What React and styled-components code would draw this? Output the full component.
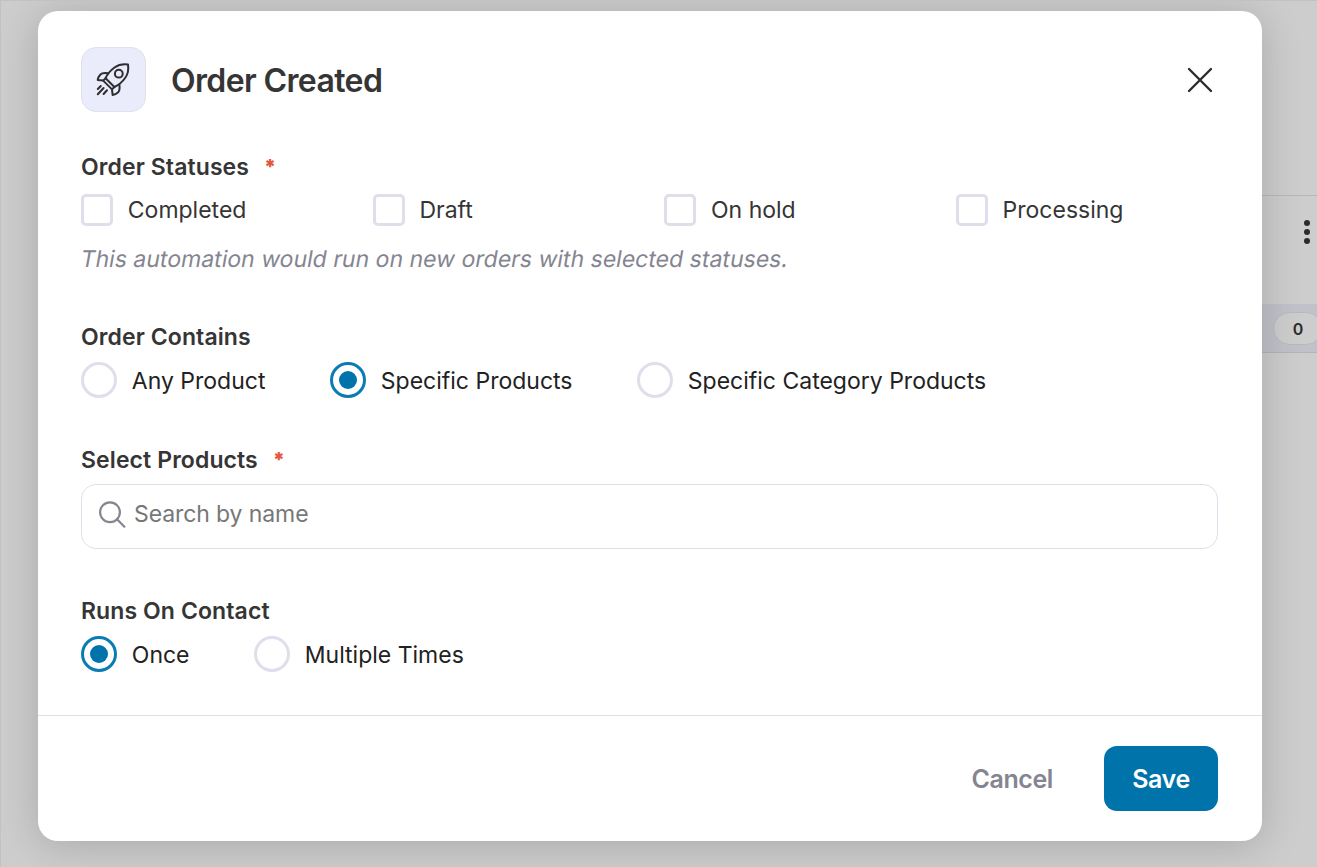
import React, { useState } from "react";
import styled, { createGlobalStyle } from "styled-components";

const statuses = ["Completed", "Draft", "On hold", "Processing"];

const containsOptions = [
  { name: "Any Product", width: 249 },
  { name: "Specific Products", width: 307 },
  { name: "Specific Category Products", width: 360 },
];

const runOptions = [
  { name: "Once", width: 173 },
  { name: "Multiple Times", width: 220 },
];

const RocketIcon = () => (
  <svg width="35" height="35" viewBox="0 0 35 35" fill="none" stroke="#2f2f2f" strokeWidth="2" strokeLinecap="round" strokeLinejoin="round">
    <path d="M32 2.500C27 1.800 22 3 18.500 5.500C14.500 8.500 11 12.500 9.600 16.200L18.400 25C22.300 23.300 26.500 19.800 29.300 15.800C31.600 12.500 32.800 7.500 32 2.500Z" />
    <circle cx="22.800" cy="11.700" r="3.900" />
    <path d="M9.600 16.200L7.200 18.600L16 27.400L18.400 25" />
    <path d="M12.300 11.300C8.500 10.600 5.800 11 4.200 12.700C2.800 14.200 2 16 1.700 18L7.200 18.600" />
    <path d="M23.300 22.500C24 26.200 23.600 28.800 21.900 30.500C20.500 31.800 18.600 32.600 16.600 32.900L16 27.400" />
    <path d="M4.800 24L1.800 27M7.600 26L1.800 32.200M11 28.300L7.600 32" />
  </svg>
);

const CloseIcon = () => (
  <svg width="26" height="26" viewBox="0 0 26 26" fill="none" stroke="#2d2d2d" strokeWidth="2.400" strokeLinecap="round">
    <path d="M2 2L24 24M24 2L2 24" />
  </svg>
);

const SearchIcon = () => (
  <svg width="28" height="28" viewBox="0 0 28 28" fill="none" stroke="#858591" strokeWidth="2.200" strokeLinecap="round">
    <circle cx="12" cy="11.300" r="9.900" />
    <path d="M19 18.300L26.400 25.700" />
  </svg>
);

const App = () => {
  const [checked, setChecked] = useState([]);
  const [contains, setContains] = useState("Specific Products");
  const [runs, setRuns] = useState("Once");

  const toggleStatus = (name) => {
    setChecked(
      checked.includes(name)
        ? checked.filter((item) => item !== name)
        : [...checked, name]
    );
  };

  return (
    <>
      <GlobalStyle />
      <Page>
        <SidePanel>
          <SideRow>
            <Dots>
              <Dot />
              <Dot />
              <Dot />
            </Dots>
          </SideRow>
          <SideCount>
            <Count>0</Count>
          </SideCount>
        </SidePanel>
        <Modal role="dialog">
          <Header>
            <IconBox>
              <RocketIcon />
            </IconBox>
            <Title>Order Created</Title>
            <CloseButton>
              <CloseIcon />
            </CloseButton>
          </Header>
          <Body>
            <Field $gap={48}>
              <Label>
                Order Statuses<Required>*</Required>
              </Label>
              <CheckGrid>
                {statuses.map((name) => (
                  <Option key={name} onClick={() => toggleStatus(name)}>
                    <CheckBox $checked={checked.includes(name)} />
                    <OptionText $color="#353535">{name}</OptionText>
                  </Option>
                ))}
              </CheckGrid>
              <Hint>This automation would run on new orders with selected statuses.</Hint>
            </Field>
            <Field $gap={47}>
              <Label>Order Contains</Label>
              <RadioRow>
                {containsOptions.map((item) => (
                  <Option key={item.name} $width={item.width} onClick={() => setContains(item.name)}>
                    <Radio $checked={contains === item.name} />
                    <RadioText>{item.name}</RadioText>
                  </Option>
                ))}
              </RadioRow>
            </Field>
            <Field $gap={47}>
              <Label $gap={9}>
                Select Products<Required>*</Required>
              </Label>
              <SearchBox>
                <SearchIcon />
                <SearchInput placeholder="Search by name" />
              </SearchBox>
            </Field>
            <Field $gap={0}>
              <Label>Runs On Contact</Label>
              <RadioRow>
                {runOptions.map((item) => (
                  <Option key={item.name} $width={item.width} onClick={() => setRuns(item.name)}>
                    <Radio $checked={runs === item.name} />
                    <RadioText>{item.name}</RadioText>
                  </Option>
                ))}
              </RadioRow>
            </Field>
          </Body>
          <Footer>
            <CancelButton>Cancel</CancelButton>
            <SaveButton>Save</SaveButton>
          </Footer>
        </Modal>
      </Page>
    </>
  );
};

const GlobalStyle = createGlobalStyle`
  * {
    box-sizing: border-box;
  }
  body {
    margin: 0;
    overflow: hidden;
    font-family: Inter, "Liberation Sans", sans-serif;
  }
  button, input {
    font-family: inherit;
    border: none;
    background: none;
    padding: 0;
  }
`;

const Page = styled.div`
  position: relative;
  display: flex;
  justify-content: flex-end;
  height: 867px;
  background-color: #cdcdcd;
  border-top: 1px solid #c2c2c2;
  border-left: 1px solid #c2c2c2;
  overflow: hidden;
`;

const SidePanel = styled.div`
  width: 100px;
  padding-top: 194px;
`;

const SideRow = styled.div`
  display: flex;
  justify-content: flex-end;
  height: 109px;
  padding: 24px 7px 0 0;
  border-top: 1px solid #b7b7be;
`;

const Dots = styled.div`
  display: flex;
  flex-direction: column;
  gap: 3px;
`;

const Dot = styled.div`
  width: 6px;
  height: 6px;
  border-radius: 50%;
  background-color: #2b2b2b;
`;

const SideCount = styled.div`
  display: flex;
  align-items: center;
  height: 49px;
  padding-left: 56px;
  background-color: #c1c2c9;
  border-bottom: 1px solid #b3b3bb;
`;

const Count = styled.div`
  display: flex;
  align-items: center;
  justify-content: center;
  flex: 0 0 50px;
  height: 33px;
  padding-top: 1px;
  border: 1px solid #b8b8c0;
  border-radius: 17px;
  background-color: #cdcdcd;
  color: #2b2b2b;
  font-size: 16px;
  font-weight: 600;
`;

const Modal = styled.div`
  position: absolute;
  top: 10px;
  left: 37px;
  display: flex;
  flex-direction: column;
  width: 1224px;
  height: 830px;
  border-radius: 20px;
  background-color: #fff;
  box-shadow: 0 4px 40px rgba(0, 0, 0, 0.18);
`;

const Header = styled.div`
  display: flex;
  align-items: center;
  padding: 36px 49px 0 43px;
`;

const IconBox = styled.div`
  display: flex;
  align-items: center;
  justify-content: center;
  width: 65px;
  height: 65px;
  border: 1px solid #e0e0ee;
  border-radius: 15px;
  background-color: #eaebfb;
`;

const Title = styled.h1`
  flex: 1;
  margin: 0 0 0 25px;
  padding-top: 3px;
  color: #353535;
  font-size: 32px;
  line-height: 40px;
  font-weight: 600;
  letter-spacing: -0.62px;
`;

const CloseButton = styled.button`
  display: flex;
  cursor: pointer;
`;

const Body = styled.div`
  flex: 1;
  padding: 40px 44px 0 43px;
`;

const Field = styled.div`
  margin-bottom: ${({ $gap }) => $gap}px;
`;

const Label = styled.div`
  display: flex;
  height: 30px;
  margin-bottom: ${({ $gap }) => $gap || 10}px;
  color: #353535;
  font-size: 23px;
  line-height: 30px;
  font-weight: 600;
  letter-spacing: 0.1px;
`;

const Required = styled.span`
  margin-left: 15px;
  color: #e4573d;
  font-size: 20px;
  line-height: 31px;
  font-weight: 900;
`;

const CheckGrid = styled.div`
  display: grid;
  grid-template-columns: repeat(4, 291.6px);
  height: 36px;
`;

const RadioRow = styled.div`
  display: flex;
  height: 36px;
`;

const Option = styled.div`
  display: flex;
  align-items: center;
  flex: none;
  width: ${({ $width }) => ($width ? `${$width}px` : "auto")};
  cursor: pointer;
`;

const OptionText = styled.span`
  margin-left: 14.8px;
  color: ${({ $color }) => $color || "#222"};
  font-size: 23px;
  line-height: 30px;
  white-space: nowrap;
`;

const RadioText = styled(OptionText)`
  padding-top: 2px;
`;

const CheckBox = styled.span`
  width: 32px;
  height: 32px;
  border: 3px solid #dfdfec;
  border-radius: 5px;
  background-color: ${({ $checked }) => ($checked ? "#0073aa" : "#fff")};
`;

const Radio = styled.span`
  display: flex;
  align-items: center;
  justify-content: center;
  width: 36px;
  height: 36px;
  border: 3px solid ${({ $checked }) => ($checked ? "#0a7cb5" : "#dfdfec")};
  border-radius: 50%;

  &::after {
    content: "";
    width: 18px;
    height: 18px;
    border-radius: 50%;
    background-color: ${({ $checked }) => ($checked ? "#0073aa" : "transparent")};
  }
`;

const Hint = styled.div`
  width: max-content;
  margin-top: 16px;
  color: #858591;
  font-size: 23px;
  line-height: 30px;
  letter-spacing: 0.02px;
  white-space: nowrap;
  transform: skewX(-10deg);
`;

const SearchBox = styled.div`
  display: flex;
  align-items: center;
  height: 65px;
  padding: 0 16px 4px;
  border: 1px solid #dfdfec;
  border-radius: 15px;
`;

const SearchInput = styled.input`
  flex: 1;
  height: 34px;
  margin: 0 0 1px 8px;
  color: #353535;
  font-size: 23px;
  letter-spacing: -0.1px;
  outline: none;

  &::placeholder {
    color: #777;
    opacity: 1;
  }
`;

const Footer = styled.div`
  display: flex;
  align-items: center;
  justify-content: flex-end;
  height: 126px;
  padding-right: 44px;
  border-top: 1px solid #dfdfea;
`;

const CancelButton = styled.button`
  margin-right: 51px;
  padding-top: 1px;
  color: #858591;
  font-size: 25px;
  font-weight: 600;
  letter-spacing: -0.4px;
  cursor: pointer;
`;

const SaveButton = styled.button`
  width: 114px;
  height: 65px;
  padding-top: 1px;
  border-radius: 13px;
  background-color: #0073aa;
  color: #fff;
  font-size: 25px;
  font-weight: 600;
  letter-spacing: -0.4px;
  cursor: pointer;
`;

export default App;
